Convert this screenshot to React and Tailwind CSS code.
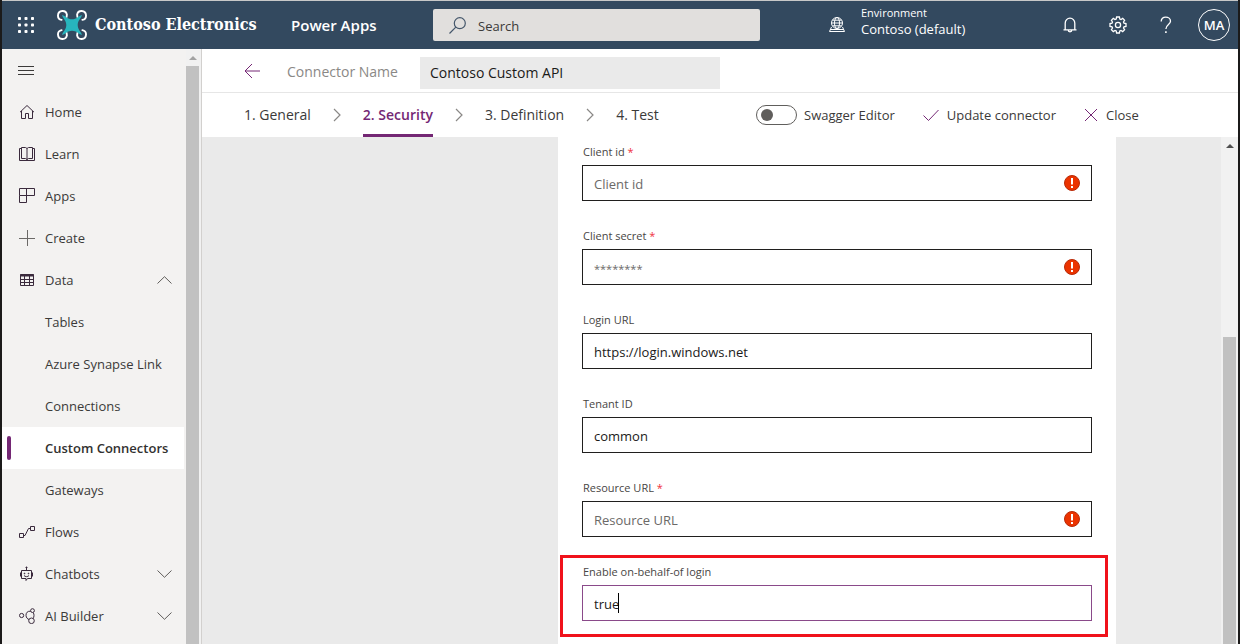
import { useState } from "react";

function Icon({ size = 16, className = "", strokeWidth = 1, children }) {
  return (
    <svg
      width={size}
      height={size}
      viewBox={`0 0 ${size} ${size}`}
      fill="none"
      stroke="currentColor"
      strokeWidth={strokeWidth}
      className={`shrink-0 ${className}`}
      aria-hidden="true"
    >
      {children}
    </svg>
  );
}

const HomeIcon = () => (
  <Icon><path d="M1 8.200 8 1.500 15 8.200M2.500 7V14.500H6.500V9.500H9.500V14.500H13.500V7" /></Icon>
);
const LearnIcon = () => (
  <Icon>
    <path d="M2.500 2.500H.5V14.500H15.500V2.500H13.500" />
    <path d="M2.500 1.500H6.500L8 2.500 9.500 1.500H13.500V12.500H9.500L8 13.500 6.500 12.500H2.500ZM8 2.500V14" />
  </Icon>
);
const AppsIcon = () => (
  <Icon><path d="M.5.5H15.500V7.500H.5ZM.5 7.500V14.500H7.500V.5" /></Icon>
);
const PlusIcon = () => (
  <Icon className="text-[#6b6967]"><path d="M8.500 0V16M0 8.500H16" /></Icon>
);
const TableIcon = () => (
  <Icon>
    <path d="M1.500 2.500H14.500V13.500H1.500ZM1.500 7.500H14.500M1.500 10.500H14.500M5.500 4V13.500M10.500 4V13.500" />
    <path d="M1 3.500H15" strokeWidth="2" />
  </Icon>
);
const FlowsIcon = () => (
  <Icon>
    <path d="M.5 9.500H4.500V13.500H.5ZM11.500 2.500H15.500V6.500H11.500ZM4.500 11.500H6L9.500 4.500H11.500" />
  </Icon>
);
const BotIcon = () => (
  <Icon>
    <path d="M2.500 4.500H12.500V12.500H8.500L7 14.500V12.500H2.500ZM7.500 4.500V1.500M1.500 6.500V10.500M13.500 6.500V10.500" />
    <path d="M5 9.500C6 11 9 11 10 9.500" />
    <circle cx="7.500" cy="1.500" r=".6" fill="currentColor" />
    <circle cx="5.500" cy="7.500" r=".4" fill="currentColor" />
    <circle cx="9.500" cy="7.500" r=".4" fill="currentColor" />
  </Icon>
);
const AiIcon = () => (
  <Icon>
    <circle cx="2.600" cy="7.500" r="2.100" />
    <circle cx="13.500" cy="2.600" r="1.900" />
    <circle cx="12.500" cy="12.800" r="2.800" />
    <path d="M11.700 3.200C8.500 2.800 6.800 5 7 7.500C7.200 9.800 8.500 11 10 11.500M14.200 4.500C15.500 6.500 15 9 14.200 10.500" />
  </Icon>
);

const Chevron = ({ d }) => (
  <svg width="15" height="8" viewBox="0 0 15 8" fill="none" stroke="#5f5d5b" className="shrink-0" aria-hidden="true">
    <path d={d} />
  </svg>
);

const StepChevron = () => (
  <svg width="8" height="14" viewBox="0 0 8 14" fill="none" stroke="#8a8886" strokeWidth="1.200" className="shrink-0" aria-hidden="true">
    <path d="M1 1 7 7 1 13" />
  </svg>
);

const Waffle = () => (
  <svg width="16" height="16" viewBox="0 0 16 16" fill="#fff" aria-hidden="true">
    {[0, 6.5, 13].map((y) =>
      [0, 6.5, 13].map((x) => <rect key={`${x}-${y}`} x={x} y={y} width="3" height="3" rx=".8" />)
    )}
  </svg>
);

const DroneLogo = () => (
  <svg width="30" height="30" viewBox="0 0 30 30" fill="none" className="shrink-0" aria-hidden="true">
    <g stroke="#fff" strokeWidth="1.900" strokeLinecap="round">
      <path d="M4.600 9.900A4.500 4.500 0 1 1 9.900 4.600L9.600 7" />
      <path d="M25.400 9.900A4.500 4.500 0 1 0 20.100 4.600L20.400 7" />
      <path d="M4.600 20.100A4.500 4.500 0 1 0 9.900 25.400L9.600 23" />
      <path d="M25.400 20.100A4.500 4.500 0 1 1 20.100 25.400L20.400 23" />
    </g>
    <path
      d="M5 5C8.500 6 10.500 9.300 15 9.300S21.500 6 25 5C24 8.500 20.700 10.500 20.700 15S24 21.500 25 25C21.500 24 19.500 20.700 15 20.700S8.500 24 5 25C6 21.500 9.300 19.500 9.300 15S6 8.500 5 5Z"
      fill="#27b5bd"
    />
  </svg>
);

const EnvironmentIcon = () => (
  <Icon size={18}>
    <circle cx="9" cy="7" r="5.500" />
    <ellipse cx="9" cy="7" rx="2.500" ry="5.500" />
    <path d="M3.500 7H14.500M4.500 4.200H13.500M4.500 9.800H13.500M3.500 11 1.500 15.500H16.500L14.500 11M2.500 13.500H15.500" />
  </Icon>
);
const BellIcon = () => (
  <Icon size={16} strokeWidth={1.300}>
    <path d="M1.500 12.800H14.500M3.200 12.800V6.200A4.800 5 0 0 1 12.800 6.200V12.800M6.200 13A1.800 1.800 0 0 0 9.800 13" />
  </Icon>
);
const GearIcon = () => (
  <Icon size={18} strokeWidth={1.300}>
    <path d="M7.600 1H10.400L10.800 3 12 3.500 13.700 2.400 15.600 4.300 14.500 6 15 7.200 17 7.600V10.400L15 10.800 14.500 12 15.600 13.700 13.700 15.600 12 14.500 10.800 15 10.400 17H7.600L7.200 15 6 14.500 4.300 15.600 2.400 13.700 3.500 12 3 10.800 1 10.400V7.600L3 7.200 3.500 6 2.400 4.300 4.300 2.400 6 3.500 7.200 3Z" />
    <circle cx="9" cy="9" r="2.600" />
  </Icon>
);
const HelpIcon = () => (
  <Icon size={18} strokeWidth={1.300}>
    <path d="M4.200 5.500C4.200 2.800 6 1.200 8.700 1.200S13.500 2.900 13.500 5.200C13.500 8.500 8.900 8.500 8.900 13" />
    <path d="M8.900 15.300V17" strokeWidth="1.600" />
  </Icon>
);

function TopBar() {
  return (
    <header className="flex h-12 shrink-0 items-center bg-[#33495f] text-white">
      <button type="button" aria-label="App launcher" className="flex h-12 w-12 shrink-0 items-center justify-center">
        <Waffle />
      </button>
      <a href="#" className="ml-[7px] flex w-[234px] shrink-0 items-center gap-2 whitespace-nowrap font-['DejaVu_Serif_Condensed','DejaVu_Serif',serif] text-base font-bold">
        <DroneLogo />
        Contoso Electronics
      </a>
      <a href="#" className="w-[142px] shrink-0 text-[15px] font-semibold">Power Apps</a>
      <label className="flex h-8 w-[327px] items-center gap-3 rounded-xs bg-[#e1dfdd] pl-4 text-[#323130]">
        <svg width="17" height="17" viewBox="0 0 17 17" fill="none" stroke="#44566a" strokeWidth="1.200" className="shrink-0" aria-hidden="true">
          <circle cx="10.800" cy="6.200" r="5.500" />
          <path d="M6.800 10.200.5 16.500" />
        </svg>
        <input type="search" aria-label="Search" placeholder="Search" className="w-full bg-transparent pt-[3px] text-[13px] outline-none placeholder:text-[#3b3a39]" />
      </label>
      <div className="ml-auto flex shrink-0 items-center">
        <button type="button" className="flex w-[218px] items-center gap-[15px] text-left">
          <EnvironmentIcon />
          <span className="flex flex-col pb-2">
            <span className="text-[11px] leading-4">Environment</span>
            <span className="text-[13px] leading-4">Contoso (default)</span>
          </span>
        </button>
        <button type="button" aria-label="Notifications" className="flex w-12 justify-center"><BellIcon /></button>
        <button type="button" aria-label="Settings" className="flex w-12 justify-center"><GearIcon /></button>
        <button type="button" aria-label="Help" className="flex w-12 justify-center"><HelpIcon /></button>
        <button type="button" aria-label="Account" className="flex w-12 justify-center">
          <span className="flex size-8 items-center justify-center rounded-full border border-white pt-[2px] text-[13px] font-semibold">MA</span>
        </button>
      </div>
    </header>
  );
}

const navItems = [
  { label: "Home", icon: <HomeIcon /> },
  { label: "Learn", icon: <LearnIcon /> },
  { label: "Apps", icon: <AppsIcon /> },
  { label: "Create", icon: <PlusIcon /> },
  { label: "Data", icon: <TableIcon />, chevron: "up" },
  { label: "Tables" },
  { label: "Azure Synapse Link" },
  { label: "Connections" },
  { label: "Custom Connectors", active: true },
  { label: "Gateways" },
  { label: "Flows", icon: <FlowsIcon /> },
  { label: "Chatbots", icon: <BotIcon />, chevron: "down" },
  { label: "AI Builder", icon: <AiIcon />, chevron: "down" },
];

function SideNav() {
  return (
    <div className="flex shrink-0 border-r border-[#d2d0ce] bg-[#f3f2f1]">
      <nav className="w-[184px] overflow-hidden pr-[2px] text-[13px] text-[#3b3a39]">
        <button type="button" aria-label="Toggle navigation" className="flex h-[42px] items-center pl-4">
          <Icon><path d="M0 4.500H16M0 8.500H16M0 12.500H16" /></Icon>
        </button>
        {navItems.map((item) => (
          <a
            key={item.label}
            href="#"
            aria-current={item.active ? "page" : undefined}
            className={
              "flex h-[42px] items-center pr-3 whitespace-nowrap " +
              (item.active ? "bg-white font-semibold text-[#323130]" : "")
            }
          >
            <span className={"ml-[5px] h-6 w-1 shrink-0 rounded-xs " + (item.active ? "bg-[#742774]" : "")} />
            <span className="mr-[10px] ml-2 flex w-4 shrink-0 justify-center text-[#3a2a3d]">{item.icon}</span>
            <span className="flex-1 pt-[2px]">{item.label}</span>
            {item.chevron && <Chevron d={item.chevron === "up" ? "M.5 7.500 7.500.7 14.500 7.500" : "M.5.5 7.500 7.300 14.500.5"} />}
          </a>
        ))}
      </nav>
      <div className="flex w-[15px] flex-col bg-[#f1f1f1] pr-[2px]" aria-hidden="true">
        <div className="flex h-[17px] shrink-0 items-center justify-center">
          <svg width="8" height="4" viewBox="0 0 8 4" fill="#a3a3a3"><path d="M0 4 4 0 8 4Z" /></svg>
        </div>
        <div className="flex-1 bg-[#c1c1c1]" />
      </div>
    </div>
  );
}

function ConnectorHeader() {
  return (
    <div className="flex h-11 shrink-0 items-center border-b border-[#e6e6e6] pl-[42px]">
      <button type="button" aria-label="Back" className="mr-[27px] text-[#742774]">
        <Icon><path d="M8 1 1 8 8 15M1 8H16" /></Icon>
      </button>
      <label htmlFor="connector-name" className="w-[133px] pt-[3px] text-sm text-[#8a8886]">Connector Name</label>
      <input
        id="connector-name"
        defaultValue="Contoso Custom API"
        className="mt-1 h-8 w-[300px] bg-[#eaeaea] px-[10px] text-sm text-[#1b1a19] outline-none"
      />
    </div>
  );
}

function StepBar() {
  const [swagger, setSwagger] = useState(false);
  return (
    <div className="flex h-11 shrink-0 items-stretch pl-[42px] text-[#3b3a39]">
      <nav aria-label="Steps" className="flex w-[512px] items-stretch gap-[22px] text-sm whitespace-nowrap">
        <a href="#" className="flex items-center">1. General</a>
        <span className="flex items-center"><StepChevron /></span>
        <a href="#" aria-current="step" className="flex items-center border-b-3 border-[#742774] pt-[3px] font-semibold text-[#742774]">2. Security</a>
        <span className="flex items-center"><StepChevron /></span>
        <a href="#" className="flex items-center">3. Definition</a>
        <span className="flex items-center"><StepChevron /></span>
        <a href="#" className="flex items-center">4. Test</a>
      </nav>
      <div className="flex items-center gap-7 text-[13px] whitespace-nowrap">
        <label className="flex items-center gap-[7px]">
          <input type="checkbox" role="switch" checked={swagger} onChange={(e) => setSwagger(e.target.checked)} className="peer sr-only" />
          <span className="flex h-5 w-[41px] shrink-0 items-center rounded-full border border-[#605e5c] px-1 peer-checked:justify-end">
            <span className="size-3 rounded-full bg-[#605e5c]" />
          </span>
          <span className="pt-[2px]">Swagger Editor</span>
        </label>
        <button type="button" className="flex items-center gap-2">
          <Icon className="text-[#742774]"><path d="M.5 8.500 5.500 13.500 15.500 3" /></Icon>
          <span className="pt-[2px]">Update connector</span>
        </button>
        <button type="button" className="flex items-center gap-2">
          <Icon size={14} className="text-[#742774]"><path d="M1 1 13 13M13 1 1 13" /></Icon>
          <span className="pt-[2px]">Close</span>
        </button>
      </div>
    </div>
  );
}

const fields = [
  { id: "client-id", label: "Client id", required: true, placeholder: "Client id", error: true },
  { id: "client-secret", label: "Client secret", required: true, placeholder: "********", error: true, masked: true },
  { id: "login-url", label: "Login URL", value: "https://login.windows.net" },
  { id: "tenant-id", label: "Tenant ID", value: "common" },
  { id: "resource-url", label: "Resource URL", required: true, placeholder: "Resource URL", error: true },
  { id: "on-behalf", label: "Enable on-behalf-of login", value: "true", highlighted: true },
];

const ErrorBadge = () => (
  <svg width="16" height="16" viewBox="0 0 16 16" className="absolute top-[10px] right-3" aria-hidden="true">
    <circle cx="8" cy="8" r="7.500" fill="#eb3300" stroke="#b82a08" />
    <path d="M7 3H9V9.500H7ZM7 11H9V13H7Z" fill="#fff" />
  </svg>
);

function Field({ field }) {
  return (
    <div className="relative flex flex-col gap-[3px]">
      <label htmlFor={field.id} className="pt-px pl-px text-[11px] leading-5 text-[#484644]">
        {field.label}
        {field.required && <span className="text-[#f0303c]"> *</span>}
      </label>
      <div className="relative">
        <input
          id={field.id}
          type={field.masked ? "password" : "text"}
          defaultValue={field.value}
          placeholder={field.placeholder}
          className={
            "block h-9 w-full border bg-white px-[11px] pt-[2px] text-[#1b1a19] outline-none placeholder:text-[#6b6967] " +
            (field.masked ? "text-[11px] " : "text-[13px] ") +
            (field.highlighted ? "border-[#8a4a8a]" : "border-[#201f1e]")
          }
        />
        {field.error && <ErrorBadge />}
        {field.highlighted && <span className="absolute top-2 left-9 h-5 w-px bg-black" />}
      </div>
      {field.highlighted && (
        <span className="pointer-events-none absolute -top-[6px] -right-4 -bottom-4 -left-[22px] border-3 border-[#f0121b]" />
      )}
    </div>
  );
}

function SecurityForm() {
  return (
    <div className="flex min-h-0 flex-1 bg-[#eaeaea]">
      <form className="mr-[105px] ml-auto flex w-[558px] flex-col gap-6 bg-white px-6 pt-1">
        {fields.map((field) => (
          <Field key={field.id} field={field} />
        ))}
      </form>
      <div className="flex w-[17px] shrink-0 flex-col bg-[#f1f1f1] pr-[2px] pl-[2px]" aria-hidden="true">
        <div className="flex h-[17px] shrink-0 items-center justify-center">
          <svg width="8" height="4" viewBox="0 0 8 4" fill="#505050"><path d="M0 4 4 0 8 4Z" /></svg>
        </div>
        <div className="mt-[183px] flex-1 bg-[#c1c1c1]" />
      </div>
    </div>
  );
}

export default function App() {
  return (
    <div className="h-screen border-x-2 border-[#1b1a1a] font-['Open_Sans','Noto_Sans',sans-serif]">
      <div className="flex h-full flex-col overflow-hidden border-t border-[#c8c8c8] bg-white">
        <TopBar />
        <div className="flex min-h-0 flex-1">
          <SideNav />
          <main className="flex min-w-0 flex-1 flex-col">
            <ConnectorHeader />
            <StepBar />
            <SecurityForm />
          </main>
        </div>
      </div>
    </div>
  );
}
